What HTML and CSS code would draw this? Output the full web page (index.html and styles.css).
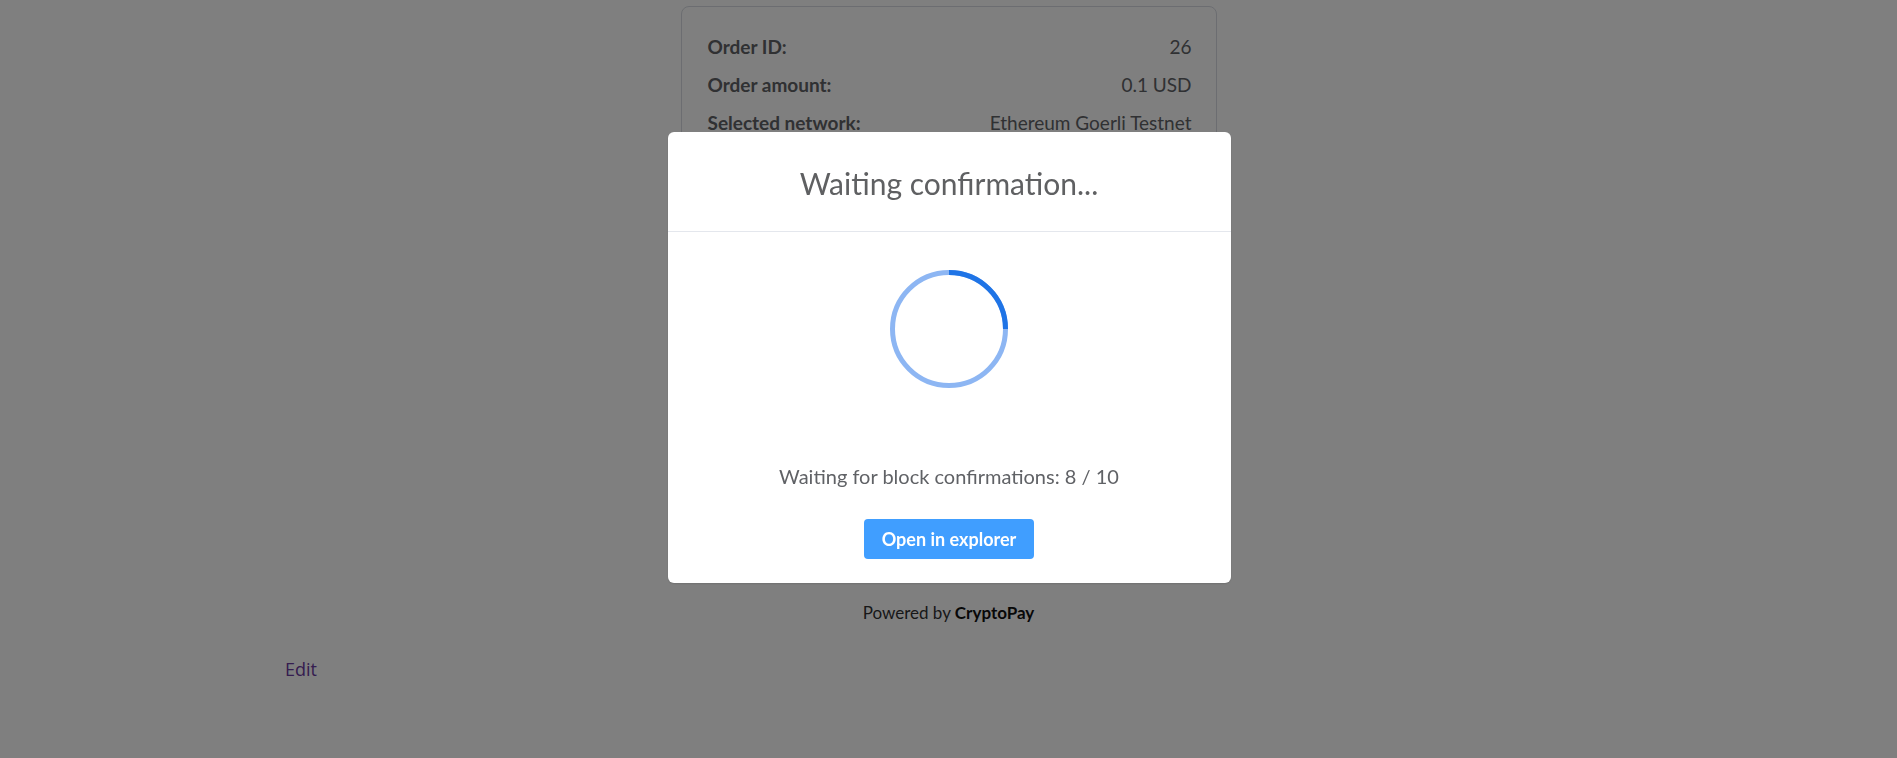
FILE: index.html
```html
<!DOCTYPE html>
<html>
<head>
<meta charset="utf-8">
<link rel="stylesheet" href="styles.css">
</head>
<body>
<div class="page">
  <div class="card">
    <div class="row"><span class="label">Order ID:</span><span class="value">26</span></div>
    <div class="row"><span class="label">Order amount:</span><span class="value">0.1 USD</span></div>
    <div class="row"><span class="label">Selected network:</span><span class="value">Ethereum Goerli Testnet</span></div>
  </div>
  <div class="powered">Powered by <b>CryptoPay</b></div>
  <div class="edit-wrap"><a class="edit" href="#">Edit</a></div>
</div>

<div class="overlay">
  <div class="modal">
    <div class="modal-header">Waiting confirmation...</div>
    <div class="modal-body">
      <svg class="spinner" width="118" height="118" viewBox="0 0 118 118">
        <circle cx="59" cy="59" r="56.5" fill="none" stroke="#8db6f3" stroke-width="5"/>
        <path d="M59 2.5 A56.5 56.5 0 0 1 115.5 59" fill="none" stroke="#1f74e6" stroke-width="5"/>
      </svg>
      <div class="status">Waiting for block confirmations: 8 / 10</div>
      <button class="btn">Open in explorer</button>
    </div>
  </div>
</div>
</body>
</html>
```

FILE: styles.css
```css
* { box-sizing: border-box; }
html, body { margin: 0; padding: 0; background: #fff; }
body { font-family: "Lato", "Noto Sans", sans-serif; color: #303133; }

.page { padding-top: 6px; }

.card {
  width: 536px;
  height: 570px;
  margin: 0 auto;
  border: 1px solid #d8dbe2;
  border-radius: 8px;
  padding: 21px 24px 0 26px;
}
.row {
  display: flex;
  justify-content: space-between;
  font-size: 19px;
  line-height: 38px;
}
.label { font-weight: 700; color: #606266; }
.value { color: #606266; }

.powered {
  text-align: center;
  margin-top: 26px;
  font-size: 17px;
  line-height: 22px;
  color: #303133;
}
.powered b { font-weight: 700; color: #111; }

.edit-wrap {
  padding-left: 285px;
  margin-top: 33px;
}
.edit {
  font-family: "Open Sans", "Noto Sans", sans-serif;
  font-size: 18px;
  line-height: 24px;
  color: #6a3aa0;
  text-decoration: none;
}

.overlay {
  position: fixed;
  inset: 0;
  background: rgba(0, 0, 0, 0.5);
  display: flex;
  justify-content: center;
  align-items: flex-start;
  padding-top: 132px;
}
.modal {
  width: 563px;
  height: 451px;
  background: #fff;
  border-radius: 6px;
  box-shadow: 0 1px 2px rgba(0,0,0,0.12);
  display: flex;
  flex-direction: column;
  margin-left: 1px;
}
.modal-header {
  height: 100px;
  border-bottom: 1px solid #e4e7ed;
  display: flex;
  align-items: center;
  justify-content: center;
  font-size: 30px;
  color: #5f6062;
  padding-top: 2px;
}
.modal-body {
  display: flex;
  flex-direction: column;
  align-items: center;
  padding-top: 38px;
}
.spinner { display: block; }
.status {
  margin-top: 75px;
  font-size: 20px;
  line-height: 26px;
  color: #606266;
}
.btn {
  margin-top: 30px;
  width: 170px;
  height: 40px;
  border: none;
  border-radius: 4px;
  background: #409eff;
  color: #fff;
  font-family: "Lato", "Noto Sans", sans-serif;
  font-weight: 700;
  font-size: 18px;
}
```
